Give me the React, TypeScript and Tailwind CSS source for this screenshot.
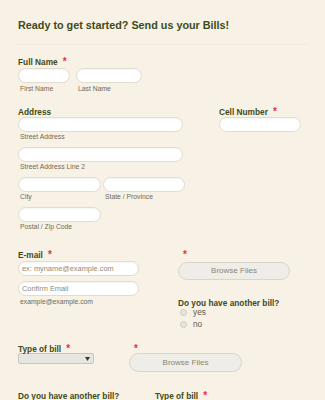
import React from "react";

const font = { fontFamily: '"Liberation Sans", Arial, sans-serif' } as const;

function Star() {
  return <span className="text-[#ec3030] ml-[5px] text-[10px] leading-[10px] font-bold">*</span>;
}

function Label({ children, star, h = "h-[10px]" }: { children: React.ReactNode; star?: boolean; h?: string }) {
  return (
    <div className={`flex items-start ${h} text-[8.3px] leading-[10px] font-bold text-[#3d4b1a]`}>
      <span>{children}</span>
      {star && <Star />}
    </div>
  );
}

function Input({ w, placeholder }: { w: string; placeholder?: string }) {
  return (
    <div
      className={`${w} h-[15px] rounded-full bg-white border border-[#e2dccf] text-[7.4px] leading-[13px] text-[#8d8a80] pl-[3px] shadow-[inset_0_1px_1px_rgba(0,0,0,0.04)]`}
    >
      {placeholder}
    </div>
  );
}

function Sub({ children }: { children: React.ReactNode }) {
  return <div className="h-[9px] text-[6.8px] leading-[9px] text-[#6d6b57] pl-[2px]">{children}</div>;
}

function Browse({ w }: { w: string }) {
  return (
    <div
      className={`${w} rounded-full bg-[#efede7] border border-[#d9d5cb] flex items-center justify-center text-[8px] text-[#898673]`}
    >
      Browse Files
    </div>
  );
}

function Radio({ label }: { label: string }) {
  return (
    <div className="flex items-center h-[12px] pl-[2px]">
      <span className="w-[7px] h-[7px] rounded-full bg-[#e6e4de] border border-[#d0ccc3]" />
      <span className="ml-[6px] text-[8.3px] text-[#5c5b47]">{label}</span>
    </div>
  );
}

export default function App() {
  return (
    <div className="w-[325px] h-[400px] overflow-hidden bg-[#f8f1e6]" style={font}>
      <div className="px-[18px]">
        <div className="pt-[19px] text-[10.8px] leading-[13px] font-bold text-[#3d4b1a]">
          Ready to get started? Send us your Bills!
        </div>
        <div className="mt-[12px] w-[290px] border-t border-dotted border-[#e9e2d5]" />

        {/* Full name */}
        <div className="mt-[12px]">
          <Label star h="h-[11px]">Full Name</Label>
          <div className="flex gap-[6px]">
            <div>
              <Input w="w-[52px]" />
              <div className="mt-[1px]">
                <Sub>First Name</Sub>
              </div>
            </div>
            <div>
              <Input w="w-[66px]" />
              <div className="mt-[1px]">
                <Sub>Last Name</Sub>
              </div>
            </div>
          </div>
        </div>

        {/* Address + Cell */}
        <div className="mt-[14px] flex">
          <div className="w-[201px]">
            <Label>Address</Label>
            <Input w="w-[165px]" />
            <Sub>Street Address</Sub>
            <div className="mt-[6px]">
              <Input w="w-[165px]" />
              <Sub>Street Address Line 2</Sub>
            </div>
            <div className="mt-[6px] flex gap-[2px]">
              <div>
                <Input w="w-[83px]" />
                <Sub>City</Sub>
              </div>
              <div>
                <Input w="w-[82px]" />
                <Sub>State / Province</Sub>
              </div>
            </div>
            <div className="mt-[6px]">
              <Input w="w-[83px]" />
              <Sub>Postal / Zip Code</Sub>
            </div>
          </div>
          <div>
            <Label star>Cell Number</Label>
            <Input w="w-[82px]" />
          </div>
        </div>

        {/* Email + Browse */}
        <div className="mt-[19px] flex">
          <div className="w-[160px]">
            <Label star>E-mail</Label>
            <div className="mt-[1px]">
              <Input w="w-[121px]" placeholder="ex: myname@example.com" />
            </div>
            <div className="mt-[5px]">
              <Input w="w-[121px]" placeholder="Confirm Email" />
            </div>
            <div className="mt-[1px]">
              <Sub>example@example.com</Sub>
            </div>
          </div>
          <div>
            <div className="h-[10px] flex items-start">
              <Star />
            </div>
            <div className="mt-[2px]">
              <Browse w="w-[112px] h-[18px]" />
            </div>
            <div className="mt-[18px]">
              <Label h="h-[8px]">Do you have another bill?</Label>
              <Radio label="yes" />
              <Radio label="no" />
            </div>
          </div>
        </div>

        {/* Type of bill + Browse */}
        <div className="mt-[14px] flex">
          <div className="w-[111px]">
            <Label star h="h-[9px]">Type of bill</Label>
            <div className="w-[76px] h-[11px] rounded-[2px] bg-[#e7e5df] border border-[#c9c5bb] flex items-center justify-end pr-[3px]">
              <svg width="5" height="4" viewBox="0 0 5 4">
                <path d="M0 0 H5 L2.5 4 Z" fill="#3a3a30" />
              </svg>
            </div>
          </div>
          <div>
            <div className="h-[9px] flex items-start">
              <Star />
            </div>
            <Browse w="w-[113px] h-[19px]" />
          </div>
        </div>

        {/* Last row */}
        <div className="mt-[19px] flex">
          <div className="w-[137px]">
            <Label>Do you have another bill?</Label>
          </div>
          <div>
            <Label star>Type of bill</Label>
          </div>
        </div>
      </div>
    </div>
  );
}
